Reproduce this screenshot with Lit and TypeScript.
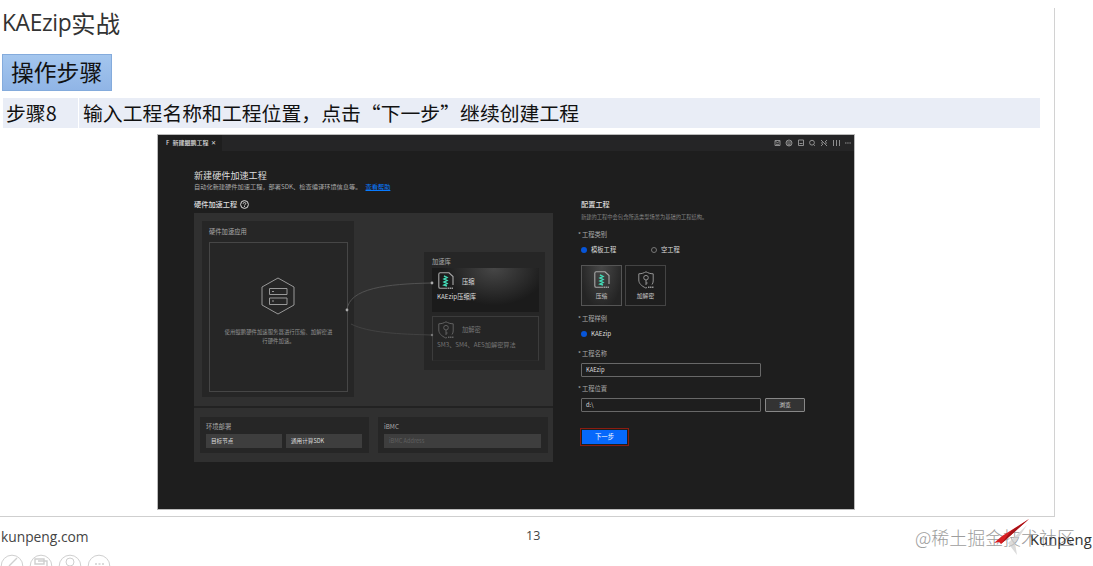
import { LitElement, html, svg, css } from "lit";
import { customElement } from "lit/decorators.js";

const zipIcon = (cls = "") => html`<svg class="ico ${cls}" viewBox="0 0 16 18" fill="none">
  <path d="M9 16.3H2.2Q.8 16.3.8 15V2.2Q.8.8 2.2.8H11L15 4.6V13" stroke="#a8a8a8" stroke-width="1.1"/>
  <path d="M6 4l3 1.5-3 1.5 3 1.5-3 1.5 3 1.5-3 1.5 3 1" stroke="#43d8b4" stroke-width="1.4"/>
  <path d="M9.5 16.3h6" stroke="#999" stroke-width="1.5" stroke-dasharray="1.5 .5"/>
</svg>`;

const shieldIcon = (cls = "") => html`<svg class="ico ${cls}" viewBox="0 0 16 18" fill="none" stroke="#929292">
  <path d="M9 16.5L7.8 17C3.5 15 .8 12.5.8 9V2.8C4 2.8 6 1.8 8 .8c2 1 4 2 7.2 2V10c0 1.5-.5 2.6-1.2 3.5"/>
  <circle cx="8" cy="6.7" r="2.3"/><path d="M8 9v5M8 12h1.6"/>
  <path d="M10 16.3h6" stroke-width="1.4" stroke-dasharray="1.5 .5"/>
</svg>`;

@customElement("app-root")
export class AppRoot extends LitElement {
  static styles = css`
    :host { display: block; position: relative; width: 1093px; height: 566px; overflow: hidden; background: #fff;
      font-family: "Noto Sans CJK SC", sans-serif; color: #111; }
    * { box-sizing: border-box; }
    div, span { white-space: nowrap; }
    svg { display: block; overflow: visible; }
    .slide { width: 1055px; height: 509px; margin-top: 8px; border-right: 1px solid #d2d2d2; border-bottom: 1px solid #cfcfcf; }
    .title { height: 30px; padding-left: 2px; line-height: 30px; font-size: 24.3px; color: #333; display: flex; }
    .title span { font-family: "Open Sans", sans-serif; font-size: 22.8px; letter-spacing: -.35px; }
    .badge { width: 110px; height: 37px; margin: 16px 0 7px 2px; padding-left: 8px; line-height: 34px; font-size: 22.8px;
      background: linear-gradient(#a4c6ee, #90b5e6); border: 1px solid #84abdc; }
    .row { display: grid; grid-template-columns: 75px 961px; gap: 1px; height: 30px; margin-left: 3px; font-size: 19.85px; line-height: 30px; }
    .row div { background: #e9edf6; padding-left: 4px; }
    .row div:first-child { padding-left: 3px; }
    .app { width: 696px; height: 374px; margin: 7px 0 0 158px; background: #1e1e1e; color: #ccc; box-shadow: 0 0 0 1px #55555566; }
    .tabs { height: 16px; display: flex; justify-content: space-between; background: #252526; }
    .tab { width: 64px; padding-left: 8px; background: #1e1e1e; display: flex; gap: 3px; font-size: 6px; line-height: 16px; font-weight: 500; color: #ddd; }
    .tools { width: 77px; height: 16px; margin-right: 2px; }
    .body { display: grid; grid-template-columns: 359px 230px; gap: 28px; padding: 17px 0 0 36px; }
    .h1 { height: 14px; line-height: 14px; font-size: 9.1px; color: #ddd; }
    .desc { height: 10px; line-height: 10px; font-size: 6.23px; color: #aaa; display: flex; gap: 4px; }
    .link { color: #087bff; text-decoration: underline; }
    .h2 { height: 12px; line-height: 12px; font-size: 7.2px; font-weight: 500; color: #ddd; display: flex; gap: 3px; align-items: center; }
    .left .h2 { margin-top: 6px; }
    .q { width: 9px; height: 9px; }
    .canvas { position: relative; width: 359px; height: 249px; margin-top: 3px; background: #303030; }
    .flow { height: 195px; border-bottom: 2px solid #222; padding: 8px; display: flex; gap: 70px; }
    .panel { background: #262626; font-size: 6.3px; color: #aaa; }
    .host { width: 152px; height: 176px; padding: 6px 6px 0 7px; }
    .cap { height: 10px; line-height: 10px; }
    .inner { height: 150px; margin-top: 5px; border: 1px solid #464646; padding-top: 34px; text-align: center; font-size: 5.4px; line-height: 8.5px; color: #929292; }
    .hex { width: 34px; height: 38px; margin: 0 auto 13px; position: relative; left: -1px; }
    .libs { width: 121px; height: 118px; margin-top: 31px; padding: 5px 6px 0 8px; }
    .lib { height: 44px; margin-top: 1px; padding: 4px 0 0 6px; background: radial-gradient(ellipse at 58% 0, #474747, #1b1b1b 60%); color: #ddd; }
    .lib.off { height: 45px; margin-top: 4px; padding-left: 5px; background: #252525; border: 1px solid #3c3c3c; border-bottom-color: #2b2b2b; color: #757575; }
    .lib-top { display: flex; gap: 8px; align-items: center; height: 18px; }
    .lib-name { line-height: 14px; margin-left: -1px; }
    .off .lib-name { margin-left: -1px; font-size: 6.2px; }
    .off .lib-top { height: 17px; }
    .ico { width: 16px; height: 18px; }
    .dim { opacity: .55; }
    .wires { position: absolute; left: 0; top: 0; width: 359px; height: 195px; }
    .env { display: flex; gap: 9px; padding: 9px 5px 0 6px; }
    .grp { width: 169px; height: 36px; padding: 5px 6px; }
    .grp.b { width: 170px; }
    .btns { display: flex; gap: 4px; margin-top: 2px; }
    .chip { width: 76px; height: 14px; padding-left: 5px; line-height: 14px; font-size: 5.6px; background: #3e3e3e; color: #ddd; }
    .chip.wide { width: 157px; color: #606060; }
    .right { padding-top: 30px; font-size: 6.3px; }
    .note { height: 10px; margin-top: 2px; line-height: 10px; font-size: 5.28px; color: #858585; }
    .lab { height: 10px; margin-top: 8px; line-height: 10px; margin-left: -3px; color: #aaa; display: flex; gap: 1px; }
    .lab.name { margin-top: 10px; }
    .lab.place { margin-top: 7px; }
    .radios { display: grid; grid-template-columns: 70px 60px; height: 10px; margin-top: 5px; line-height: 10px; color: #ddd; }
    .radio { display: flex; align-items: center; gap: 4px; }
    .dot { width: 6px; height: 6px; border-radius: 50%; background: #0755d8; }
    .dot.o { background: none; border: 1px solid #777; }
    .cards { display: flex; gap: 3px; margin-top: 10px; }
    .card { width: 41px; height: 41px; padding-top: 5px; border: 1px solid #444; display: flex; flex-direction: column; align-items: center; gap: 2px; font-size: 5.8px; line-height: 10px; color: #ccc; }
    .card.on { background: radial-gradient(at 50% 0, #484848, #242424 80%); border-color: #555; }
    .line { display: flex; gap: 4px; margin-top: 4px; }
    .field { width: 180px; height: 14px; border: 1px solid #686868; border-radius: 1px; padding-left: 4px; line-height: 12px; font-size: 5.8px; color: #ddd; }
    .browse { width: 40px; height: 14px; border: 1px solid #888; border-radius: 1px; background: #333; text-align: center; font-size: 5.8px; line-height: 12px; color: #ddd; }
    .next { width: 49px; height: 18px; margin: 16px 0 0 -1px; border: 1px solid #8a1c10; padding: 1px; }
    .next div { width: 45px; height: 14px; background: #0668fb; color: #fff; text-align: center; line-height: 14px; }
    .footer { display: grid; grid-template-columns: 526px 389px 178px; height: 49px; padding-top: 9px; font-family: "Open Sans", sans-serif; color: #444; line-height: 22px; }
    .site { padding-left: 1px; font-size: 13.8px; line-height: 21px; }
    .page { font-size: 12.5px; line-height: 20px; }
    .mark { position: relative; height: 30px; font-size: 17.95px; line-height: 23px; font-family: "Noto Sans CJK SC", sans-serif; color: #9d9d9d; font-weight: 300; }
    .logo { position: absolute; left: 79px; top: -8px; width: 38px; height: 38px; }
    .brand { position: absolute; left: 115px; top: 1px; line-height: 24px; font-family: "Open Sans", sans-serif; font-size: 14.8px; font-weight: 400; color: #333; }
    .controls { position: absolute; left: 0; top: 554px; width: 112px; height: 12px; }
  `;

  render() {
    return html`
      <div class="slide">
        <div class="title"><span>KAEzip</span>实战</div>
        <div class="badge">操作步骤</div>
        <div class="row"><div>步骤8</div><div>输入工程名称和工程位置，点击“下一步”继续创建工程</div></div>
        <div class="app">
          <div class="tabs">
            <div class="tab"><span>F</span><span>新建鲲鹏工程</span><span>✕</span></div>
            <svg class="tools" viewBox="0 0 77 16" fill="none" stroke="#9a9a9a" stroke-width=".9">
              <path d="M0 5.5h5v5H0zM.5 6l2 2 2-2M1 9.3h3"/>
              <circle cx="14" cy="8" r="3"/><path d="M11.5 7h5M13 8v2h2V8"/>
              <path d="M23.500 5h5v5.500h-5zM24.500 8.500h3"/>
              <circle cx="37" cy="7.700" r="2.400"/><path d="M38.500 9.500l1.300 1.300"/>
              <path d="M46 5l6 6M52 5l-2 2M48 9l-2 2M46 8h2M50 8h2"/>
              <path d="M58.500 5v6M61.500 5v6M64.500 5v6"/>
              <path d="M70 8h6" stroke-dasharray="1.500 .700"/>
            </svg>
          </div>
          <div class="body">
            <div class="left">
              <div class="h1">新建硬件加速工程</div>
              <div class="desc"><span>自动化新建硬件加速工程，部署SDK、检查编译环境信息等。</span><span class="link">查看帮助</span></div>
              <div class="h2">硬件加速工程
                <svg class="q" viewBox="0 0 9 9" fill="none" stroke="#ddd"><circle cx="4.5" cy="4.5" r="3.9"/><path d="M3.2 3.7c0-1.8 2.7-1.6 2.5 0 0 .8-1.2.9-1.2 1.800M4.500 6.100v.9" stroke-width=".9"/></svg>
              </div>
              <div class="canvas">
                <div class="flow">
                  <div class="panel host">
                    <div class="cap">硬件加速应用</div>
                    <div class="inner">
                      <svg class="hex" viewBox="0 0 34 38" fill="none" stroke="#989898"><path d="M17 1l16 9v18l-16 9-16-9V10z"/><path d="M8.500 11.500h17.500v6H8.500zM8.500 21h17.500v6.500h-17.500zM11 14.500h2M11 24h2"/></svg>
                      使用鲲鹏硬件加速服务器进行压缩、加解密进<br>行硬件加速。
                    </div>
                  </div>
                  <div class="panel libs">
                    <div class="cap">加速库</div>
                    <div class="lib"><div class="lib-top">${zipIcon()}<span>压缩</span></div><div class="lib-name">KAEzip压缩库</div></div>
                    <div class="lib off"><div class="lib-top">${shieldIcon("dim")}<span>加解密</span></div><div class="lib-name">SM3、SM4、AES加解密算法</div></div>
                  </div>
                </div>
                <svg class="wires" viewBox="0 0 359 195" fill="none" stroke="#565656" stroke-width=".9">
                  <path d="M153 97C155 75 193 71 237 70"/><path d="M157 111C175 120 205 121 237 122" stroke="#444"/>
                  <g fill="#aaa" stroke="none"><circle cx="153" cy="97" r="1.400"/><circle cx="238" cy="70" r="1.400"/><circle cx="238" cy="122" r="1.200" fill="#777"/></g>
                </svg>
                <div class="env">
                  <div class="panel grp"><div class="cap">环境部署</div><div class="btns"><div class="chip">目标节点</div><div class="chip">通用计算SDK</div></div></div>
                  <div class="panel grp b"><div class="cap">iBMC</div><div class="btns"><div class="chip wide">iBMC Address</div></div></div>
                </div>
              </div>
            </div>
            <div class="right">
              <div class="h2">配置工程</div>
              <div class="note">新建的工程中会包含所选类型场景为基础的工程结构。</div>
              <div class="lab"><span>*</span>工程类别</div>
              <div class="radios"><div class="radio"><i class="dot"></i>模板工程</div><div class="radio"><i class="dot o"></i>空工程</div></div>
              <div class="cards"><div class="card on">${zipIcon()}压缩</div><div class="card">${shieldIcon()}加解密</div></div>
              <div class="lab"><span>*</span>工程样例</div>
              <div class="radios"><div class="radio"><i class="dot"></i>KAEzip</div></div>
              <div class="lab name"><span>*</span>工程名称</div>
              <div class="line"><div class="field">KAEzip</div></div>
              <div class="lab place"><span>*</span>工程位置</div>
              <div class="line"><div class="field">d:\\</div><div class="browse">浏览</div></div>
              <div class="next"><div>下一步</div></div>
            </div>
          </div>
        </div>
      </div>
      <div class="footer">
        <div class="site">kunpeng.com</div><div class="page">13</div>
        <div class="mark">@稀土掘金技术社区
          <svg class="logo" viewBox="0 0 38 38"><path d="M33 7L14 25l9 12-2-12z" fill="#ccc" opacity=".7"/><path d="M35 1L8 18l-8 7 5-1 2 2z" fill="#d81f22"/><path d="M35 1L17 13 7 26z" fill="#a51318"/></svg>
          <span class="brand">Kunpeng</span>
        </div>
      </div>
      <svg class="controls" viewBox="0 0 112 12" fill="none" stroke="#cfcfcf">
        ${[12, 41, 70, 99].map((x) => svg`<circle cx=${x} cy="12" r="10.800"/>`)}
        <path d="M9 12l8-8M35 5h9v5h-9zM38 7h9v5M95 10h2M98.500 10h2M102 10h2" stroke-width="1.400"/><circle cx="70" cy="8" r="4"/>
      </svg>`;
  }
}
